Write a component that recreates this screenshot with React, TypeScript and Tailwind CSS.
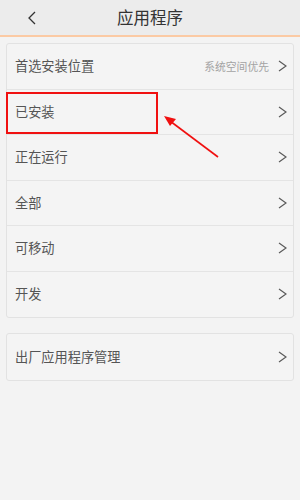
import React from "react";

const Chevron = () => (
  <svg width="9" height="12" viewBox="0 0 9 12" className="shrink-0">
    <path d="M1 1 L8 6 L1 11" fill="none" stroke="#5a5a5a" strokeWidth="1.2" />
  </svg>
);

const Row = ({ label, value, last }: { label: string; value?: string; last?: boolean }) => (
  <div className={`flex h-[45.5px] items-center pl-[8px] pr-[6px] ${last ? "" : "border-b border-[#e4e4e4]"}`}>
    <span className="flex-1 text-[13.2px] text-[#555]">{label}</span>
    {value && <span className="mr-[9px] text-[10.8px] text-[#a3a3a3]">{value}</span>}
    <Chevron />
  </div>
);

export default function App() {
  const rows = ["首选安装位置", "已安装", "正在运行", "全部", "可移动", "开发"];
  return (
    <div
      className="relative h-[500px] w-[300px] overflow-hidden bg-[#f3f3f3]"
      style={{ fontFamily: '"Noto Sans CJK SC", "Noto Sans", sans-serif' }}
    >
      <div className="relative flex h-[37px] items-center justify-center border-b-2 border-[#fbcaa4] bg-[#ececec]">
        <svg width="10" height="14" viewBox="0 0 10 14" className="absolute left-[27px] top-[11px]">
          <path d="M8 1 L2 7 L8 13" fill="none" stroke="#333" strokeWidth="1.3" />
        </svg>
        <span className="text-[16.5px] text-[#333]">应用程序</span>
      </div>
      <div className="px-[6px] pt-[6px]">
        <div className="rounded-[3px] border border-[#e2e2e2] bg-[#f4f4f4]">
          {rows.map((r, i) => (
            <Row key={r} label={r} value={i === 0 ? "系统空间优先" : undefined} last={i === rows.length - 1} />
          ))}
        </div>
        <div className="mt-[15px] rounded-[3px] border border-[#e2e2e2] bg-[#f4f4f4]">
          <Row label="出厂应用程序管理" last />
        </div>
      </div>
      <div className="absolute left-[6px] top-[92px] h-[42px] w-[152px] border-2 border-[#f01010]" />
      <svg className="absolute left-0 top-0" width="300" height="500">
        <line x1="218" y1="157" x2="170" y2="121" stroke="#f01010" strokeWidth="1.6" />
        <polygon points="164,116 176,119 170,126" fill="#f01010" />
      </svg>
    </div>
  );
}
